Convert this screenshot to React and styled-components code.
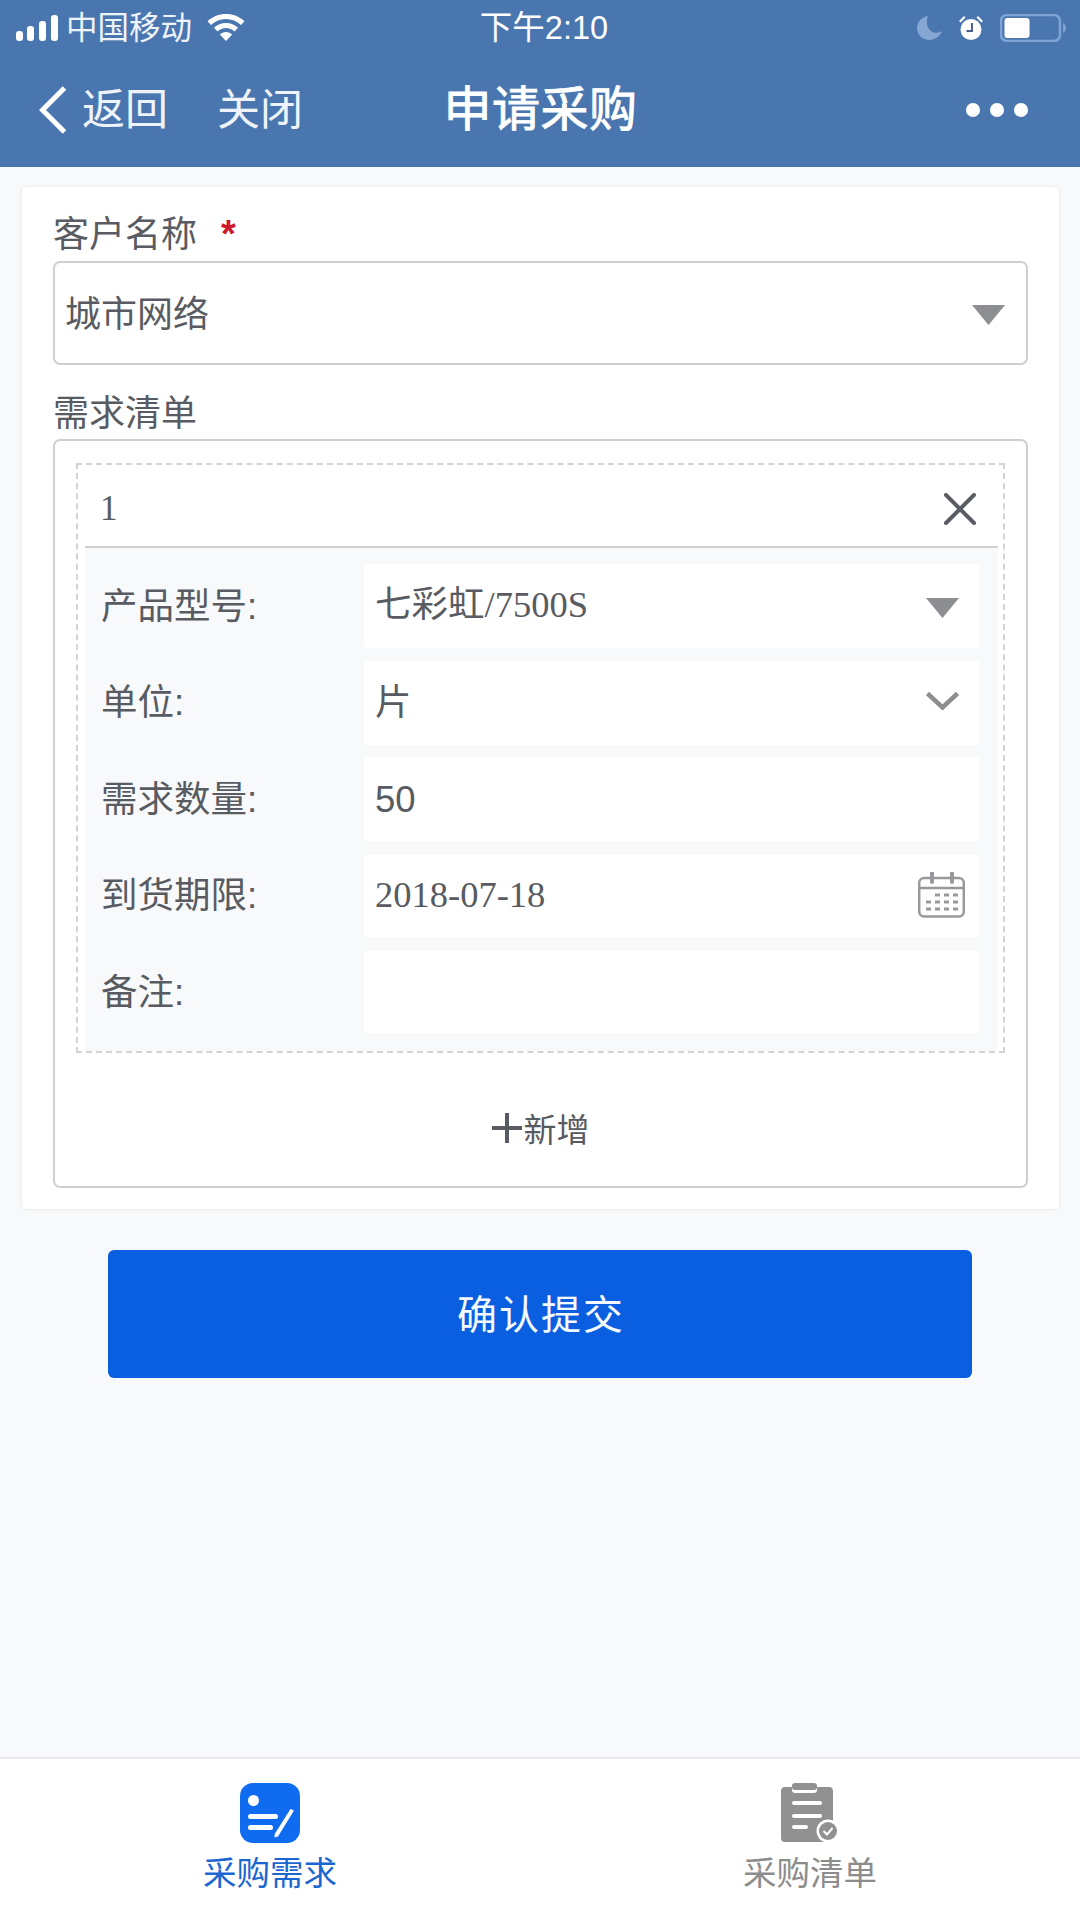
import styled, { createGlobalStyle } from "styled-components";

const sans = `"Liberation Sans", "Noto Sans CJK SC", sans-serif`;
const serif = `"Liberation Serif", "Noto Sans CJK SC", serif`;

const GlobalStyle = createGlobalStyle`
    html, body {
        margin: 0;
        padding: 0;
        background: #f8f9fb;
    }
    * {
        box-sizing: border-box;
    }
`;

const Page = styled.div`
    width: 1080px;
    height: 1920px;
    display: flex;
    flex-direction: column;
    font-family: ${sans};
    color: #585b61;
    overflow: hidden;
`;

const Header = styled.header`
    height: 167px;
    flex-shrink: 0;
    background: #4a76b0;
    color: #fff;
`;

const StatusBar = styled.div`
    height: 55px;
    display: grid;
    grid-template-columns: 1fr auto 1fr;
    align-items: center;
    padding: 0 14px 0 16px;
`;

const StatusLeft = styled.div`
    display: flex;
    align-items: center;
`;

const Carrier = styled.span`
    font-size: 31.500px;
    line-height: 40px;
    margin: 0 15px 0 8px;
    color: #eef3f9;
`;

const Clock = styled.span`
    font-size: 32.500px;
    line-height: 40px;
    padding-left: 6px;
`;

const StatusRight = styled.div`
    display: flex;
    align-items: center;
    justify-content: flex-end;
    gap: 16px;
`;

const NavBar = styled.nav`
    height: 112px;
    display: grid;
    grid-template-columns: 1fr auto 1fr;
    align-items: center;
    padding: 0 38px 2px 39px;
`;

const NavLeft = styled.div`
    display: flex;
    align-items: center;
`;

const NavLink = styled.span`
    font-size: 43px;
    line-height: 56px;
    margin-left: ${(props) => props.$gap}px;
    color: #eef3f9;
`;

const Title = styled.h1`
    margin: 0;
    font-size: 48px;
    line-height: 60px;
    font-weight: 400;
    letter-spacing: 0.500px;
    -webkit-text-stroke: 0.900px #fff;
`;

const NavDots = styled.div`
    display: flex;
    justify-content: flex-end;
    gap: 10px;
    padding-right: 14px;
`;

const Dot = styled.i`
    width: 14px;
    height: 14px;
    border-radius: 50%;
    background: #fff;
`;

const Card = styled.section`
    margin: 20px 21px 0 22px;
    padding: 28px 31px 21px;
    background: #fff;
    border-radius: 4px;
    box-shadow: 0 0 3px rgba(60, 70, 90, 0.14);
`;

const FieldLabel = styled.div`
    font-size: 36px;
    line-height: 40px;
    margin: ${(props) => (props.$first ? "0 0 6px" : "29px 0 5px")};
`;

const Required = styled.span`
    color: #d0182c;
    font-size: 38px;
    font-weight: 700;
    line-height: 30px;
    margin-left: 24px;
`;

const SelectBox = styled.div`
    height: 104px;
    border: 2px solid #cfcfcf;
    border-radius: 7px;
    display: flex;
    align-items: center;
    justify-content: space-between;
    padding: 0 21px 0 10px;
    font-size: 36px;
`;

const SelectValue = styled.span`
    padding-bottom: 4px;
`;

const ListBox = styled.div`
    border: 2px solid #cfcfcf;
    border-radius: 7px;
    padding: 22px 21px 0;
`;

const Item = styled.div`
    border: 2px dashed #d2d3d6;
    padding: 0 5px 0 7px;
`;

const ItemHead = styled.div`
    height: 83px;
    display: flex;
    align-items: center;
    justify-content: space-between;
    padding: 6px 22px 0 15px;
    border-bottom: 2px solid #d0d0d2;
    font-family: ${serif};
    font-size: 35px;
`;

const ItemBody = styled.div`
    background: #f8f9fb;
    padding: 16px 19px 17px 16px;
    display: flex;
    flex-direction: column;
    gap: 12.500px;
`;

const Row = styled.div`
    display: flex;
    align-items: center;
    font-size: 36.500px;
`;

const RowLabel = styled.span`
    width: 263px;
    flex-shrink: 0;
    padding-bottom: 6px;
`;

const RowField = styled.div`
    flex: 1;
    height: 84px;
    background: #fff;
    border-radius: 4px;
    display: flex;
    align-items: center;
    justify-content: space-between;
    padding: 0 20px 0 11px;
    font-family: ${(props) => (props.$plain ? sans : serif)};
`;

const RowValue = styled.span`
    margin-bottom: ${(props) => props.$lift || 0}px;
`;

const AddRow = styled.div`
    height: 133px;
    padding-top: 16px;
    display: flex;
    align-items: center;
    justify-content: center;
    gap: 2px;
    font-size: 33px;
    color: #585b61;
`;

const SubmitButton = styled.button`
    display: block;
    width: 864px;
    height: 128px;
    margin: 41px auto 0;
    padding: 0 0 4px 2px;
    border: none;
    border-radius: 6px;
    background: #0a5fe0;
    color: #f4f8ff;
    font-family: ${sans};
    font-size: 40px;
    letter-spacing: 2px;
`;

const TabBar = styled.footer`
    margin-top: auto;
    height: 163px;
    flex-shrink: 0;
    background: #fff;
    border-top: 2px solid #e8e9ed;
    display: grid;
    grid-template-columns: 1fr 1fr;
`;

const Tab = styled.div`
    display: flex;
    flex-direction: column;
    align-items: center;
    padding-top: 24px;
    color: ${(props) => (props.$active ? "#1b66d0" : "#8c8c8c")};
`;

const TabText = styled.span`
    margin-top: 11px;
    font-size: 33.500px;
    line-height: 40px;
`;

const ArrowSvg = styled.svg`
    flex-shrink: 0;
    margin-top: ${(props) => props.$down || 0}px;
    margin-bottom: ${(props) => props.$up || 0}px;
`;

const CalendarSvg = styled.svg`
    flex-shrink: 0;
    margin: 0 -6px 2px 0;
`;

const PlusSvg = styled.svg`
    flex-shrink: 0;
`;

function SignalIcon() {
    return (
        <svg width="42" height="28" viewBox="0 0 42 28" fill="#fff">
            <rect x="0" y="17" width="7" height="10" rx="3" />
            <rect x="11" y="12" width="7" height="15" rx="3" />
            <rect x="23" y="7" width="7" height="20" rx="3" />
            <rect x="35" y="1" width="7" height="26" rx="3" />
        </svg>
    );
}

function WifiIcon() {
    return (
        <svg width="38" height="28" viewBox="0 0 38 28" fill="#fff">
            <path d="M19 0C12 0 5.500 2.600 0.500 7.200L4 11C8 7.300 13.300 5 19 5s11 2.300 15 6l3.500-3.800C32.500 2.600 26 0 19 0z" />
            <path d="M19 9c-4.600 0-8.800 1.700-12 4.700l3.500 3.700c2.300-2 5.200-3.300 8.500-3.300s6.200 1.300 8.500 3.300l3.500-3.700C27.800 10.700 23.600 9 19 9z" />
            <path d="M19 18c-2.400 0-4.500.9-6.100 2.400L19 27l6.100-6.600C23.500 18.900 21.400 18 19 18z" />
        </svg>
    );
}

function MoonIcon() {
    return (
        <svg width="25" height="24" viewBox="0 0 25 24" fill="#86a6d3">
            <path d="M11 0C5 1 0 5.800 0 12c0 6.600 5.400 12 12 12 6 0 11-3.800 13-9-2 1.200-4 1.800-6 1.800C12 16.800 7.500 8 11 0z" />
        </svg>
    );
}

function AlarmIcon() {
    return (
        <svg width="26" height="26" viewBox="0 0 26 26">
            <circle cx="13" cy="14.500" r="10.500" fill="#fff" />
            <path d="M1 6l5-5 1.500 1.500-5 5zM25 6l-5-5-1.500 1.500 5 5z" fill="#fff" />
            <path d="M14 8v8H8.500" fill="none" stroke="#4a5f90" strokeWidth="2" />
        </svg>
    );
}

function BatteryIcon() {
    return (
        <svg width="66" height="28" viewBox="0 0 66 28">
            <rect x="1" y="1" width="59" height="26" rx="6" fill="none" stroke="#7fa3d4" strokeWidth="2.500" />
            <rect x="4.500" y="4" width="25" height="20" rx="3" fill="#fff" />
            <path d="M63 9c2 1 3 3 3 5s-1 4-3 5z" fill="#7fa3d4" />
        </svg>
    );
}

function BackIcon() {
    return (
        <svg width="28" height="48" viewBox="0 0 28 48" fill="none" stroke="#fff" strokeWidth="5">
            <path d="M25.500 2L3.500 24l22 22" />
        </svg>
    );
}

function Triangle({ down }) {
    return (
        <ArrowSvg $down={down} width="33" height="20" viewBox="0 0 33 20" fill="#8d8e91">
            <path d="M0 0h33L16.500 20z" />
        </ArrowSvg>
    );
}

function Chevron({ up }) {
    return (
        <ArrowSvg $up={up} width="33" height="20" viewBox="0 0 33 20" fill="none" stroke="#8d8e91" strokeWidth="4.500">
            <path d="M1.500 2.500l15 14 15-14" />
        </ArrowSvg>
    );
}

function CloseIcon() {
    return (
        <svg width="32" height="32" viewBox="0 0 32 32" fill="none" stroke="#5a5d64" strokeWidth="4" strokeLinecap="round">
            <path d="M2 2l28 28M30 2L2 30" />
        </svg>
    );
}

function CalendarIcon() {
    return (
        <CalendarSvg width="47" height="46" viewBox="0 0 47 46" fill="none" stroke="#98999c" strokeWidth="2.500">
            <rect x="1.200" y="6" width="44.600" height="38.500" rx="5" />
            <path d="M1.200 16h44.600" />
            <path d="M14 1v9M34 1v9" strokeWidth="4" strokeLinecap="round" />
            <path d="M17 23h5M26 23h5M35 23h5M8 30h5M17 30h5M26 30h5M35 30h5M8 37h5M17 37h5M26 37h5M35 37h5" strokeWidth="3" />
        </CalendarSvg>
    );
}

function PlusIcon() {
    return (
        <PlusSvg width="30" height="30" viewBox="0 0 30 30" fill="none" stroke="#585b61" strokeWidth="4">
            <path d="M15 0v30M0 15h30" />
        </PlusSvg>
    );
}

function RequestIcon() {
    return (
        <svg width="60" height="60" viewBox="0 0 60 60">
            <rect width="60" height="60" rx="13" fill="#0f6bef" />
            <circle cx="13.500" cy="17.500" r="5.500" fill="#fff" />
            <rect x="8" y="31" width="30" height="5" rx="2.500" fill="#fff" />
            <rect x="8" y="42" width="25" height="5" rx="2.500" fill="#fff" />
            <path d="M50.500 26l3.500 1.500L38 53.500l-3.500 1 .2-3.500z" fill="#fff" />
        </svg>
    );
}

function OrderListIcon() {
    return (
        <svg width="60" height="60" viewBox="0 0 60 60">
            <path d="M5 4h7v3a3 3 0 0 0 3 3h19a3 3 0 0 0 3-3V4h12a4 4 0 0 1 4 4v47a4 4 0 0 1-4 4H5a4 4 0 0 1-4-4V8a4 4 0 0 1 4-4z" fill="#919191" />
            <rect x="12" y="0" width="25" height="7" rx="3" fill="#919191" />
            <rect x="12" y="18" width="30" height="4" rx="2" fill="#fff" />
            <rect x="12" y="31" width="30" height="4" rx="2" fill="#fff" />
            <rect x="12" y="42" width="16" height="4" rx="2" fill="#fff" />
            <circle cx="48" cy="48" r="11.500" fill="#fff" />
            <circle cx="48" cy="48" r="9" fill="#919191" />
            <path d="M43.500 48l3.500 3.500 5.500-6.500" fill="none" stroke="#fff" strokeWidth="2" />
        </svg>
    );
}

const rows = [
    { label: "产品型号:", value: "七彩虹/7500S", lift: 10, icon: <Triangle down={4} /> },
    { label: "单位:", value: "片", lift: 6, icon: <Chevron up={3} /> },
    { label: "需求数量:", value: "50", lift: -2, plain: true },
    { label: "到货期限:", value: "2018-07-18", lift: 2, icon: <CalendarIcon /> },
    { label: "备注:", value: "" },
];

function App() {
    return (
        <Page>
            <GlobalStyle />
            <Header>
                <StatusBar>
                    <StatusLeft>
                        <SignalIcon />
                        <Carrier>中国移动</Carrier>
                        <WifiIcon />
                    </StatusLeft>
                    <Clock>下午2:10</Clock>
                    <StatusRight>
                        <MoonIcon />
                        <AlarmIcon />
                        <BatteryIcon />
                    </StatusRight>
                </StatusBar>
                <NavBar>
                    <NavLeft>
                        <BackIcon />
                        <NavLink $gap={15}>返回</NavLink>
                        <NavLink $gap={49}>关闭</NavLink>
                    </NavLeft>
                    <Title>申请采购</Title>
                    <NavDots>
                        <Dot />
                        <Dot />
                        <Dot />
                    </NavDots>
                </NavBar>
            </Header>

            <Card>
                <FieldLabel $first>
                    客户名称<Required>*</Required>
                </FieldLabel>
                <SelectBox>
                    <SelectValue>城市网络</SelectValue>
                    <Triangle down={4} />
                </SelectBox>
                <FieldLabel>需求清单</FieldLabel>
                <ListBox>
                    <Item>
                        <ItemHead>
                            1
                            <CloseIcon />
                        </ItemHead>
                        <ItemBody>
                            {rows.map((row) => (
                                <Row key={row.label}>
                                    <RowLabel>{row.label}</RowLabel>
                                    <RowField $plain={row.plain}>
                                        <RowValue $lift={row.lift}>{row.value}</RowValue>
                                        {row.icon}
                                    </RowField>
                                </Row>
                            ))}
                        </ItemBody>
                    </Item>
                    <AddRow>
                        <PlusIcon />
                        新增
                    </AddRow>
                </ListBox>
            </Card>

            <SubmitButton>确认提交</SubmitButton>

            <TabBar>
                <Tab $active>
                    <RequestIcon />
                    <TabText>采购需求</TabText>
                </Tab>
                <Tab>
                    <OrderListIcon />
                    <TabText>采购清单</TabText>
                </Tab>
            </TabBar>
        </Page>
    );
}

export default App;
